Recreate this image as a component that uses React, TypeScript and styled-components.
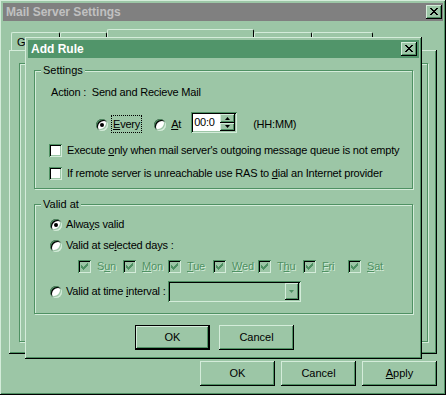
import styled, { createGlobalStyle, css } from 'styled-components';

const FACE = '#9cc6a6';
const LIGHT = '#d4ecda';
const SHADOW = '#4f9163';
const DARK = '#000';
const CAPTION = '#51956a';
const INACTIVE = '#808080';

const GlobalStyle = createGlobalStyle`
  html, body { margin: 0; padding: 0; background: ${FACE}; }
  body {
    font-family: "Liberation Sans", Arial, sans-serif;
    font-size: 11px;
    line-height: 13px;
    letter-spacing: -0.2px;
    color: #000;
  }
`;

const raised = css`
  box-shadow: inset -1px -1px ${DARK}, inset 1px 1px ${LIGHT}, inset -2px -2px ${SHADOW};
`;
const frame = css`
  box-shadow: inset -1px -1px ${DARK}, inset 1px 1px ${LIGHT}, inset -2px -2px ${SHADOW}, inset 2px 2px ${FACE};
`;
const sunken = css`
  box-shadow: inset 1px 1px ${SHADOW}, inset -1px -1px ${LIGHT}, inset 2px 2px ${DARK}, inset -2px -2px ${FACE};
`;

const Window = styled.div`
  position: relative;
  width: 446px;
  height: 395px;
  box-sizing: border-box;
  padding: 3px;
  background: ${FACE};
  display: flex;
  flex-direction: column;
  ${frame}
`;

const TitleBar = styled.div<{ $active?: boolean }>`
  height: 18px;
  flex: none;
  display: flex;
  align-items: center;
  justify-content: space-between;
  padding: 0 ${p => (p.$active ? 2 : 1)}px 0 3px;
  background: ${p => (p.$active ? CAPTION : INACTIVE)};
  color: ${p => (p.$active ? '#fff' : '#c0c0c0')};
  font-weight: bold;
  font-size: 12px;
  letter-spacing: 0;
`;

const CloseButton = styled.span`
  width: 16px;
  height: 14px;
  box-sizing: border-box;
  background: ${FACE};
  display: flex;
  align-items: center;
  justify-content: center;
  padding: 0 1px 1px 0;
  ${raised}
`;

const TabRow = styled.div`
  display: flex;
  align-items: flex-end;
  height: 21px;
  margin: 8px 0 0 8px;
`;

const Tab = styled.div<{ $width: number; $selected?: boolean }>`
  width: ${p => p.$width}px;
  height: ${p => (p.$selected ? 21 : 18)}px;
  box-sizing: border-box;
  padding: 3px 0 0 5px;
  border-top: 1px solid ${LIGHT};
  border-left: 1px solid ${LIGHT};
  border-right: 1px solid ${DARK};
  border-radius: 2px 2px 0 0;
  overflow: hidden;
  white-space: nowrap;
`;

const TabPanel = styled.div`
  height: 304px;
  flex: none;
  margin: 0 6px;
  box-sizing: border-box;
  padding: 13px 9px 12px 10px;
  display: flex;
  ${raised}
`;

const EtchedBox = styled.div`
  flex: 1;
  border: 1px solid ${SHADOW};
  box-shadow: inset 1px 1px ${LIGHT}, 1px 1px ${LIGHT};
`;

const ButtonRow = styled.div<{ $top: number; $left?: number }>`
  display: flex;
  justify-content: ${p => (p.$left !== undefined ? 'flex-start' : 'flex-end')};
  gap: ${p => (p.$left !== undefined ? 9 : 6)}px;
  margin: ${p => p.$top}px ${p => (p.$left !== undefined ? 0 : 6)}px 0 ${p => p.$left ?? 0}px;
`;

const Button = styled.button<{ $default?: boolean }>`
  width: 75px;
  height: 25px;
  margin: 0;
  padding: 0;
  box-sizing: border-box;
  background: ${FACE};
  font: inherit;
  letter-spacing: 0;
  color: #000;
  border: ${p => (p.$default ? `1px solid ${DARK}` : 'none')};
  ${raised}
`;

const Dialog = styled.div`
  position: absolute;
  left: 25px;
  top: 37px;
  width: 397px;
  height: 322px;
  box-sizing: border-box;
  padding: 3px;
  background: ${FACE};
  display: flex;
  flex-direction: column;
  ${frame}
`;

const DialogBody = styled.div`
  display: flex;
  flex-direction: column;
  padding: 6px 6px 0 6px;
`;

const Group = styled.fieldset<{ $top?: number }>`
  margin: ${p => p.$top ?? 0}px 0 0 0;
  padding: 0;
  min-width: 0;
  border: 1px solid ${SHADOW};
  box-shadow: inset 1px 1px ${LIGHT}, 1px 1px ${LIGHT};
`;

const Legend = styled.legend`
  margin-left: 6px;
  padding: 0 2px;
  line-height: 13px;
  letter-spacing: 0;
  background: ${FACE};
`;

const GroupContent = styled.div<{ $bottom: number }>`
  display: flex;
  flex-direction: column;
  padding-bottom: ${p => p.$bottom}px;
`;

const Row = styled.div<{ $top: number; $indent: number; $height?: number }>`
  display: flex;
  align-items: center;
  height: ${p => p.$height ?? 13}px;
  margin-top: ${p => p.$top}px;
  padding-left: ${p => p.$indent}px;
  white-space: nowrap;
`;

const ScheduleRow = styled.div`
  display: flex;
  align-items: flex-start;
  height: 21px;
  margin-top: 13px;
  padding-left: 61px;
  white-space: nowrap;
`;

const RadioCircle = styled.span<{ $gap?: number; $top?: number }>`
  width: 12px;
  height: 12px;
  flex: none;
  border-radius: 50%;
  background: #fff;
  display: flex;
  align-items: center;
  justify-content: center;
  margin-right: ${p => p.$gap ?? 4}px;
  margin-top: ${p => p.$top ?? 0}px;
  box-shadow: inset 1px 1px ${SHADOW}, inset -1px -1px ${LIGHT}, inset 2px 2px ${DARK}, inset -2px -2px ${FACE};
`;

const RadioDot = styled.span`
  width: 4px;
  height: 4px;
  border-radius: 50%;
  background: #000;
`;

const FocusLabel = styled.span`
  margin: 3px 12px 0 0;
  padding: 2px 1px 0 1px;
  height: 14px;
  border: 1px dotted #000;
`;

const TextLabel = styled.span<{ $top?: number; $left?: number }>`
  margin-top: ${p => p.$top ?? 0}px;
  margin-left: ${p => p.$left ?? 0}px;
`;

const SpinEdit = styled.span`
  width: 46px;
  height: 21px;
  box-sizing: border-box;
  padding: 2px;
  margin-left: 10px;
  display: flex;
  background: #fff;
  ${sunken}
`;

const SpinText = styled.span`
  flex: 1;
  padding: 2px 0 0 1px;
`;

const SpinButtons = styled.span`
  width: 15px;
  display: flex;
  flex-direction: column;
`;

const SpinButton = styled.span`
  flex: 1;
  background: ${FACE};
  display: flex;
  align-items: center;
  justify-content: center;
  ${raised}
`;

const CheckBox = styled.span<{ $disabled?: boolean; $gap: number }>`
  width: 13px;
  height: 13px;
  flex: none;
  box-sizing: border-box;
  margin-right: ${p => p.$gap}px;
  background: ${p => (p.$disabled ? FACE : '#fff')};
  display: flex;
  align-items: center;
  justify-content: center;
  ${sunken}
`;

const Day = styled.span`
  width: 45px;
  display: flex;
  align-items: center;
`;

const Disabled = styled.span`
  color: ${SHADOW};
  text-shadow: 1px 1px 0 ${LIGHT};
`;

const Combo = styled.span`
  width: 133px;
  height: 21px;
  box-sizing: border-box;
  padding: 2px;
  margin-left: 2px;
  display: flex;
  justify-content: flex-end;
  background: ${FACE};
  ${sunken}
`;

const ComboButton = styled.span`
  width: 14px;
  background: ${FACE};
  display: flex;
  align-items: center;
  justify-content: center;
  ${raised}
`;

function CloseGlyph() {
  return (
    <svg width="8" height="7" viewBox="0 0 8 7" shapeRendering="crispEdges">
      <path d="M0 0h2v1h1v1h2V1h1V0h2v1H7v1H6v1H5v1h1v1h1v1h1v1H6V6H5V5H3v1H2v1H0V6h1V5h1V4h1V3H2V2H1V1H0z" fill="#000" />
    </svg>
  );
}

function CheckGlyph({ color }: { color: string }) {
  return (
    <svg width="7" height="7" viewBox="0 0 7 7" shapeRendering="crispEdges">
      <path d="M6 0h1v3H6v1H5v1H4v1H3v1H2V6H1V5H0V2h1v1h1v1h1V3h1V2h1V1h1z" fill={color} />
    </svg>
  );
}

function Arrow({ up, color = '#000' }: { up?: boolean; color?: string }) {
  return (
    <svg width="5" height="3" viewBox="0 0 5 3">
      <path d={up ? 'M2.5 0L5 3H0z' : 'M0 0h5L2.5 3z'} fill={color} />
    </svg>
  );
}

function Radio({ checked, gap, top }: { checked?: boolean; gap?: number; top?: number }) {
  return (
    <RadioCircle $gap={gap} $top={top}>
      {checked && <RadioDot />}
    </RadioCircle>
  );
}

const days: [string, string, string][] = [
  ['S', 'u', 'n'],
  ['', 'M', 'on'],
  ['', 'T', 'ue'],
  ['', 'W', 'ed'],
  ['T', 'h', 'u'],
  ['', 'F', 'ri'],
  ['', 'S', 'at'],
];

export default function App() {
  return (
    <>
      <GlobalStyle />
      <Window>
        <TitleBar>
          <span>Mail Server Settings</span>
          <CloseButton><CloseGlyph /></CloseButton>
        </TitleBar>
        {/* only the first tab's label peeks out from under the dialog */}
        <TabRow>
          <Tab $width={49}>G</Tab>
          <Tab $width={47} />
          <Tab $width={147} $selected />
          <Tab $width={58} />
          <Tab $width={61} />
        </TabRow>
        <TabPanel>
          <EtchedBox />
        </TabPanel>
        <ButtonRow $top={7}>
          <Button>OK</Button>
          <Button>Cancel</Button>
          <Button><u>A</u>pply</Button>
        </ButtonRow>

        <Dialog>
          <TitleBar $active>
            <span>Add Rule</span>
            <CloseButton><CloseGlyph /></CloseButton>
          </TitleBar>
          <DialogBody>
            <Group>
              <Legend>Settings</Legend>
              <GroupContent $bottom={8}>
                <Row $top={9} $indent={16}>Action :&nbsp; Send and Recieve Mail</Row>
                <ScheduleRow>
                  <Radio checked gap={3} top={7} />
                  <FocusLabel><u>E</u>very</FocusLabel>
                  <Radio gap={5} top={7} />
                  <TextLabel $top={6}><u>A</u>t</TextLabel>
                  <SpinEdit>
                    <SpinText>00:0</SpinText>
                    <SpinButtons>
                      <SpinButton><Arrow up /></SpinButton>
                      <SpinButton><Arrow /></SpinButton>
                    </SpinButtons>
                  </SpinEdit>
                  <TextLabel $top={6} $left={16}>(HH:MM)</TextLabel>
                </ScheduleRow>
                <Row $top={11} $indent={14}>
                  <CheckBox $gap={5} />
                  <span>Execute <u>o</u>nly when mail server's outgoing message queue is not empty</span>
                </Row>
                <Row $top={10} $indent={14}>
                  <CheckBox $gap={5} />
                  <span>If remote server is unreachable use RAS to <u>d</u>ial an Internet provider</span>
                </Row>
              </GroupContent>
            </Group>

            <Group $top={9}>
              <Legend>Valid at</Legend>
              <GroupContent $bottom={11}>
                <Row $top={7} $indent={15}>
                  <Radio checked />
                  <span>Alwa<u>y</u>s valid</span>
                </Row>
                <Row $top={8} $indent={15}>
                  <Radio />
                  <span>Valid at se<u>l</u>ected days :</span>
                </Row>
                <Row $top={8} $indent={43}>
                  {days.map(([a, u, b]) => (
                    <Day key={a + u + b}>
                      <CheckBox $disabled $gap={6}><CheckGlyph color={SHADOW} /></CheckBox>
                      <Disabled>{a}<u>{u}</u>{b}</Disabled>
                    </Day>
                  ))}
                </Row>
                <Row $top={8} $indent={15} $height={21}>
                  <Radio />
                  <span>Valid at time <u>i</u>nterval :</span>
                  <Combo>
                    <ComboButton><Arrow color={SHADOW} /></ComboButton>
                  </Combo>
                </Row>
              </GroupContent>
            </Group>

            <ButtonRow $top={11} $left={101}>
              <Button $default>OK</Button>
              <Button>Cancel</Button>
            </ButtonRow>
          </DialogBody>
        </Dialog>
      </Window>
    </>
  );
}
